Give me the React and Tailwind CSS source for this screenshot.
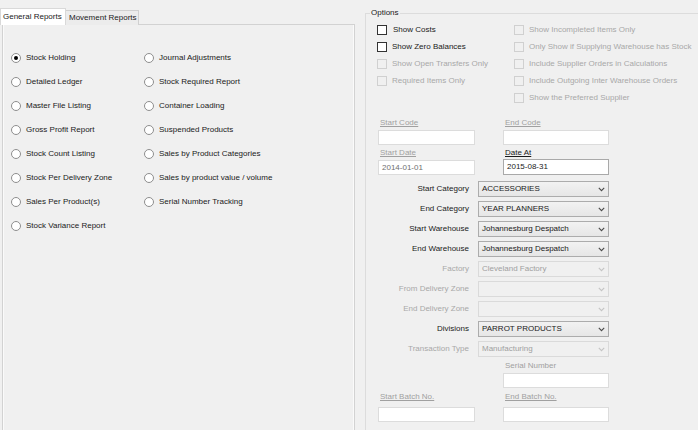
import React from 'react';

const leftReports = [
  'Stock Holding',
  'Detailed Ledger',
  'Master File Listing',
  'Gross Profit Report',
  'Stock Count Listing',
  'Stock Per Delivery Zone',
  'Sales Per Product(s)',
  'Stock Variance Report',
];

const rightReports = [
  'Journal Adjustments',
  'Stock Required Report',
  'Container Loading',
  'Suspended Products',
  'Sales by Product Categories',
  'Sales by product value / volume',
  'Serial Number Tracking',
];

function Radio({ label, checked }) {
  return (
    <div className="flex items-center h-[24px]">
      <span className="w-[10px] h-[10px] rounded-full border border-[#8e8e8e] bg-white flex items-center justify-center">
        {checked && <span className="w-[4px] h-[4px] rounded-full bg-black" />}
      </span>
      <span className="ml-[5px] whitespace-nowrap">{label}</span>
    </div>
  );
}

function Check({ label, disabled, indent }) {
  return (
    <div className="flex items-center h-[17px]">
      <span
        className={
          disabled
            ? 'w-[10px] h-[10px] border border-[#d0d0d0] bg-[#f0f0f0]'
            : 'w-[10px] h-[10px] border border-[#333333] bg-white'
        }
      />
      <span
        className={
          (indent ? 'ml-[6px] ' : 'ml-[5px] ') +
          (disabled ? 'text-[#a8a8a8] whitespace-nowrap' : 'text-[#1a1a1a] whitespace-nowrap')
        }
      >
        {label}
      </span>
    </div>
  );
}

function Chevron({ disabled }) {
  return (
    <svg width="7" height="5" viewBox="0 0 7 5" className="mr-[3px]">
      <path
        d="M0.8 0.8 L3.5 3.6 L6.2 0.8"
        fill="none"
        stroke={disabled ? '#c4c4c4' : '#4a4a4a'}
        strokeWidth="1.1"
      />
    </svg>
  );
}

function SelectRow({ label, value, disabled }) {
  return (
    <div className="flex items-center h-[20px]">
      <span
        className={
          disabled
            ? 'w-[91px] text-right text-[#a8a8a8] whitespace-nowrap'
            : 'w-[91px] text-right text-[#1a1a1a] whitespace-nowrap'
        }
      >
        {label}
      </span>
      <div
        className={
          disabled
            ? 'ml-[9px] w-[131px] h-[16px] flex items-center justify-between border border-[#dadada] bg-[#f0f0f0] text-[#a0a0a0]'
            : 'ml-[9px] w-[131px] h-[16px] flex items-center justify-between border border-[#acacac] bg-gradient-to-b from-[#f2f2f2] to-[#e6e6e6] text-[#1a1a1a]'
        }
      >
        <span className="pl-[3px] whitespace-nowrap">{value}</span>
        <Chevron disabled={disabled} />
      </div>
    </div>
  );
}

function TextBox({ value, dark, grayText }) {
  return (
    <div
      className={
        dark
          ? 'h-[16px] flex items-center border border-[#a9a9a9] bg-white pl-[3px] text-[#1a1a1a]'
          : 'h-[15px] flex items-center border border-[#dcdcdc] bg-white pl-[3px] ' +
            (grayText ? 'text-[#707070]' : 'text-[#1a1a1a]')
      }
    >
      {value}
    </div>
  );
}

function FieldLabel({ children, dark }) {
  return (
    <div
      className={
        dark
          ? 'h-[10px] leading-[10px] pl-[2px] underline text-[#1a1a1a]'
          : 'h-[10px] leading-[10px] pl-[2px] underline text-[#a0a0a0]'
      }
    >
      {children}
    </div>
  );
}

export default function App() {
  return (
    <div
      className="w-[698px] h-[430px] overflow-hidden bg-[#f0f0f0] flex items-start text-[8px] leading-[10px] text-[#1a1a1a]"
      style={{ fontFamily: '"Liberation Sans", Arial, sans-serif' }}
    >
      {/* left: report tabs */}
      <div className="w-[355px] h-[450px] shrink-0 flex flex-col pt-[8px]">
        <div className="flex items-end h-[17px] relative z-10">
          <div className="h-[17px] w-[66px] bg-white border border-b-0 border-[#d9d9d9] flex items-center pl-[2px]">
            General Reports
          </div>
          <div className="h-[15px] w-[73px] bg-[#ececec] border border-l-0 border-b-0 border-[#d0d0d0] flex items-center pl-[3px]">
            Movement Reports
          </div>
        </div>
        <div className="flex-1 ml-[2px] -mt-px border border-[#d2d2d2] bg-[#f0f0f0]">
          <div className="h-full border-l border-r border-[#fafafa] flex pt-[21px] pl-[7px]">
            <div className="w-[133px] flex flex-col">
              {leftReports.map((r, i) => (
                <Radio key={r} label={r} checked={i === 0} />
              ))}
            </div>
            <div className="flex flex-col">
              {rightReports.map((r) => (
                <Radio key={r} label={r} />
              ))}
            </div>
          </div>
        </div>
      </div>

      {/* right: options group */}
      <div className="relative ml-[10px] mt-[13px] h-[430px] flex-1 min-w-0 border-t border-l border-[#dcdcdc]">
        <span className="absolute left-[4px] -top-[6px] bg-[#f0f0f0] px-px leading-[10px]">Options</span>

        <div className="flex pt-[7px] pl-[11px]">
          <div className="w-[137px] flex flex-col">
            <Check label="Show Costs" indent />
            <Check label="Show Zero Balances" />
            <Check label="Show Open Transfers Only" disabled />
            <Check label="Required Items Only" disabled />
          </div>
          <div className="flex flex-col">
            <Check label="Show Incompleted Items Only" disabled />
            <Check label="Only Show if Supplying Warehouse has Stock" disabled />
            <Check label="Include Supplier Orders in Calculations" disabled />
            <Check label="Include Outgoing Inter Warehouse Orders" disabled />
            <Check label="Show the Preferred Supplier" disabled />
          </div>
        </div>

        <div className="pl-[12px] pt-[12px]">
          <div className="grid grid-cols-[97px_106px] gap-x-[28px]">
            <div>
              <FieldLabel>Start Code</FieldLabel>
              <div className="mt-[2px]">
                <TextBox value="" />
              </div>
              <div className="mt-[3px]">
                <FieldLabel>Start Date</FieldLabel>
              </div>
              <div className="mt-[2px]">
                <TextBox value="2014-01-01" grayText />
              </div>
            </div>
            <div>
              <FieldLabel>End Code</FieldLabel>
              <div className="mt-[2px]">
                <TextBox value="" />
              </div>
              <div className="mt-[3px]">
                <FieldLabel dark>Date At</FieldLabel>
              </div>
              <div className="mt-[1px]">
                <TextBox value="2015-08-31" dark />
              </div>
            </div>
          </div>

          <div className="mt-[4px] flex flex-col">
            <SelectRow label="Start Category" value="ACCESSORIES" />
            <SelectRow label="End Category" value="YEAR PLANNERS" />
            <SelectRow label="Start Warehouse" value="Johannesburg Despatch" />
            <SelectRow label="End Warehouse" value="Johannesburg Despatch" />
            <SelectRow label="Factory" value="Cleveland Factory" disabled />
            <SelectRow label="From Delivery Zone" value="" disabled />
            <SelectRow label="End Delivery Zone" value="" disabled />
            <SelectRow label="Divisions" value="PARROT PRODUCTS" />
            <SelectRow label="Transaction Type" value="Manufacturing" disabled />
          </div>

          <div className="grid grid-cols-[97px_106px] gap-x-[28px] mt-[2px]">
            <div />
            <div>
              <div className="h-[10px] leading-[10px] pl-[2px] text-[#a0a0a0]">Serial Number</div>
              <div className="mt-[2px]">
                <TextBox value="" />
              </div>
            </div>
            <div className="mt-[4px]">
              <FieldLabel>Start Batch No.</FieldLabel>
              <div className="mt-[5px]">
                <TextBox value="" />
              </div>
            </div>
            <div className="mt-[4px]">
              <FieldLabel>End Batch No.</FieldLabel>
              <div className="mt-[5px]">
                <TextBox value="" />
              </div>
            </div>
          </div>
        </div>
      </div>
    </div>
  );
}
